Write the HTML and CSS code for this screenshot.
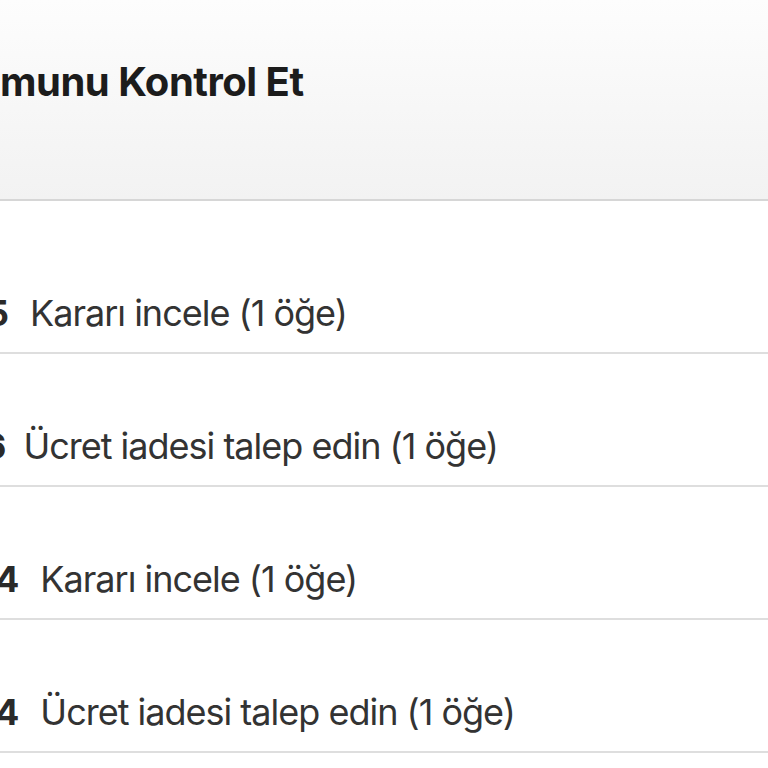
FILE: index.html
```html
<!DOCTYPE html>
<html lang="tr">
<head>
<meta charset="utf-8">
<link rel="stylesheet" href="styles.css">
</head>
<body>
<div class="screen">
  <header class="nav">
    <h1 class="title">munu Kontrol Et</h1>
  </header>
  <ul class="list">
    <li class="row first"><span class="num n1">5</span><span class="label">Kararı incele (1 öğe)</span></li>
    <li class="row"><span class="num n2">6</span><span class="label">Ücret iadesi talep edin (1 öğe)</span></li>
    <li class="row"><span class="num n3">4</span><span class="label">Kararı incele (1 öğe)</span></li>
    <li class="row"><span class="num n3">4</span><span class="label">Ücret iadesi talep edin (1 öğe)</span></li>
  </ul>
</div>
</body>
</html>
```

FILE: styles.css
```css
html, body {
  margin: 0;
  padding: 0;
  background: #ffffff;
}
.screen {
  width: 768px;
  height: 768px;
  overflow: hidden;
  font-family: Inter, "Open Sans", "Liberation Sans", sans-serif;
}
.nav {
  height: 199px;
  background: linear-gradient(#fdfdfd, #f2f2f2);
  border-bottom: 2px solid #d6d6d6;
  display: flex;
  align-items: flex-start;
}
.title {
  margin: 52px 0 0 0;
  font-size: 40px;
  line-height: 60px;
  font-weight: 700;
  color: #1c1c1c;
  letter-spacing: -0.5px;
}
.list {
  list-style: none;
  margin: 0;
  padding: 0;
}
.row {
  height: 131px;
  border-bottom: 2px solid #dedede;
  display: flex;
  align-items: flex-end;
  box-sizing: content-box;
  white-space: nowrap;
  font-size: 36px;
  line-height: 44px;
  color: #333333;
}
.row.first {
  height: 151px;
}
.row .label {
  padding-bottom: 17px;
  letter-spacing: -1px;
}
.row .num {
  font-weight: 700;
  color: #2a2a2a;
  padding-bottom: 17px;
  display: inline-block;
}
.n1 { margin-left: -14px; margin-right: 21px; }
.n2 { margin-left: -17px; margin-right: 17px; }
.n3 { margin-left: -5px; margin-right: 21px; }
```
